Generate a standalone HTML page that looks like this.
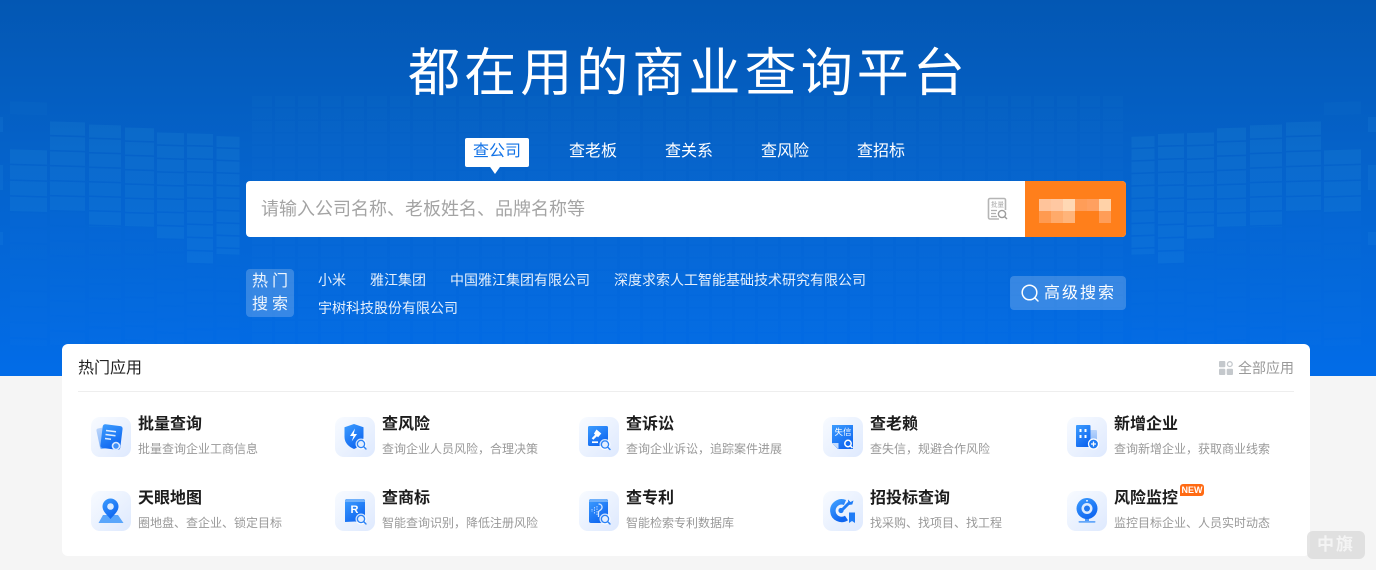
<!DOCTYPE html>
<html lang="zh-CN">
<head>
<meta charset="utf-8">
<title>商业查询平台</title>
<style>
*{box-sizing:border-box;margin:0;padding:0}
html,body{width:1376px;height:570px;overflow:hidden;background:#f5f5f5;font-family:"Liberation Sans","Noto Sans CJK SC",sans-serif}
.abs,.a{position:absolute;white-space:nowrap}
#hero{left:0;top:0;width:1376px;height:376px;background:linear-gradient(180deg,#0357b3 0%,#0562c9 40%,#026ce8 100%)}
#title{left:408px;top:32px;font-size:52px;line-height:84px;letter-spacing:4.1px;color:#fff;font-weight:400}
.tab{top:140px;font-size:16px;line-height:24px;color:#fff}
#tabon{left:465px;top:138px;width:64px;height:29px;background:#fff;border-radius:2px;color:#1272e6;font-size:16px;line-height:28px;text-align:center}
#arrow{left:488px;top:164px;width:0;height:0;border-left:7px solid transparent;border-right:7px solid transparent;border-top:10px solid #fff}
#search{left:246px;top:181px;width:880px;height:56px;background:#fff;border-radius:4px;overflow:hidden}
#ph{left:15px;top:14px;font-size:18px;line-height:28px;color:#a4a4a4}
#btn{left:779px;top:0;width:101px;height:56px;background:#ff7f1b}
.m{position:absolute;width:12px;height:12px}
#hot{left:246px;top:269px;width:48px;height:48px;background:rgba(255,255,255,.2);border-radius:4px;color:rgba(255,255,255,.92);font-size:16px;line-height:23px;letter-spacing:4px;padding:1px 0 0 6px;white-space:normal}
.lk{font-size:14px;line-height:20px;color:rgba(255,255,255,.9)}
#adv{left:1010px;top:276px;width:116px;height:34px;background:rgba(255,255,255,.2);border-radius:4px}
#advt{left:34px;top:6px;font-size:16px;line-height:24px;letter-spacing:2px;color:#fff}
#card{left:62px;top:344px;width:1248px;height:212px;background:#fff;border-radius:6px}
#ch{left:16px;top:13px;font-size:16px;line-height:24px;color:#222}
#line{left:16px;top:47px;width:1216px;height:1px;background:#eee}
#all{left:1176px;top:13px;font-size:14px;line-height:22px;color:#999}
.ib{position:absolute;width:40px;height:40px;border-radius:9px;background:linear-gradient(135deg,#f8fbff 0%,#dee9fe 100%)}
.ib svg{display:block;width:40px;height:40px}
.t{position:absolute;font-size:16px;line-height:24px;color:#1c1c1c;font-weight:700;white-space:nowrap}
.s{position:absolute;font-size:12px;line-height:18px;color:#999;white-space:nowrap}
#new{left:1118px;top:140px;width:24px;height:12px;background:#ff6a13;border-radius:3px 3px 3px 0;color:#fff;font-size:9px;line-height:12px;font-weight:700;text-align:center}
#wm{left:1307px;top:531px;width:58px;height:28px;background:rgba(205,205,205,.55);border-radius:6px;color:rgba(255,255,255,.65);font-size:17px;line-height:28px;font-weight:700;text-align:center;letter-spacing:2px}
</style>
</head>
<body>
<svg width="0" height="0" style="position:absolute"><defs>
<linearGradient id="g" x1="0" y1="0" x2="0.6" y2="1"><stop offset="0" stop-color="#3d9dff"/><stop offset="1" stop-color="#0f66f0"/></linearGradient>
<linearGradient id="l" x1="0" y1="0" x2="0" y2="1"><stop offset="0" stop-color="#b9d4fb"/><stop offset="1" stop-color="#7fb2fa"/></linearGradient>
<g id="mag"><circle cx="0" cy="0" r="4.300" fill="none" stroke="#fff" stroke-opacity=".8" stroke-width="2.400"/><circle cx="0" cy="0" r="3.600" fill="#e3eeff" stroke="#2a82f6" stroke-width="1.300"/><path d="M2.800 2.800L5 5" stroke="#2a82f6" stroke-width="1.400" stroke-linecap="round"/></g>
</defs></svg>

<div id="hero" class="abs">
<svg width="1376" height="376" style="position:absolute;left:0;top:0" fill="none">
<defs>
<g id="bars">
 <g stroke="#43b6f0" stroke-opacity=".1" transform="skewY(1.6)">
  <path d="M28.500 149V212" stroke-width="37" stroke-dasharray="14.300 1.500"/>
  <path d="M28.500 101V114" stroke-width="37" stroke-opacity=".04"/>
  <path d="M67.500 120V210" stroke-width="35" stroke-dasharray="13.500 1.500"/>
  <path d="M105 122V224" stroke-width="32" stroke-dasharray="13 1.500"/>
  <path d="M139.500 124V223" stroke-width="29" stroke-dasharray="12.800 1.500"/>
  <path d="M170.500 128V235" stroke-width="27" stroke-dasharray="11.900 1.500"/>
  <path d="M200 128V259" stroke-width="26" stroke-dasharray="11.600 1.500"/>
  <path d="M228 130V248" stroke-width="23" stroke-dasharray="11 1.500"/>
 </g>
 <g stroke="#43b6f0" stroke-opacity=".022" transform="skewY(1.6)">
  <path d="M28.500 212V345" stroke-width="37" stroke-dasharray="14.300 1.500"/>
  <path d="M67.500 210V345" stroke-width="35" stroke-dasharray="13.500 1.500"/>
  <path d="M105 224V345" stroke-width="32" stroke-dasharray="13 1.500"/>
  <path d="M139.500 223V345" stroke-width="29" stroke-dasharray="12.800 1.500"/>
  <path d="M170.500 235V345" stroke-width="27" stroke-dasharray="11.900 1.500"/>
  <path d="M200 259V345" stroke-width="26" stroke-dasharray="11.600 1.500"/>
  <path d="M228 248V345" stroke-width="23" stroke-dasharray="11 1.500"/>
 </g>
 <path d="M-2 117V132M-2 165V190M-2 232V245" stroke="#43b6f0" stroke-opacity=".09" stroke-width="10"/>
</g>
</defs>
<use href="#bars"/>
<use href="#bars" transform="translate(1371,0) scale(-1,1)"/>
<g stroke="#5cc0f5" stroke-opacity=".03">
 <path d="M262 96V345M285 96V345M308 96V345M331 96V345M354 96V345M377 96V345M400 96V345M423 96V345M446 96V345M469 96V345M492 96V345M515 96V345M538 96V345M561 96V345M584 96V345M607 96V345M630 96V345M653 96V345M676 96V345M699 96V345M722 96V345M745 96V345M768 96V345M791 96V345M814 96V345M837 96V345M860 96V345M883 96V345M906 96V345M929 96V345M952 96V345M975 96V345M998 96V345M1021 96V345M1044 96V345M1067 96V345M1090 96V345M1113 96V345" stroke-width="20" stroke-dasharray="11 1.500"/>
</g>
</svg>

<div id="title" class="abs">都在用的商业查询平台</div>
<div id="tabon" class="abs">查公司</div>
<div id="arrow" class="abs"></div>
<div class="abs tab" style="left:569px">查老板</div>
<div class="abs tab" style="left:665px">查关系</div>
<div class="abs tab" style="left:761px">查风险</div>
<div class="abs tab" style="left:857px">查招标</div>

<div id="search" class="abs">
 <div id="ph" class="abs">请输入公司名称、老板姓名、品牌名称等</div>
 <svg style="position:absolute;left:741px;top:16px" width="22" height="25" viewBox="0 0 22 25" fill="none">
  <path d="M12 22H3a1.500 1.500 0 0 1-1.500-1.500V3A1.500 1.500 0 0 1 3 1.500h14A1.500 1.500 0 0 1 18.500 3v10" stroke="#b5b5b5" stroke-width="1.600"/>
  <text x="4" y="9.500" font-size="6.500" fill="#a8a8a8" font-family="'Noto Sans CJK SC',sans-serif">批量</text>
  <path d="M4 13.500h6M4 16.500h5M4 19.500h6" stroke="#b0b0b0" stroke-width="1.300"/>
  <circle cx="15" cy="17" r="3.600" stroke="#9c9c9c" stroke-width="1.400" fill="#fff"/>
  <path d="M17.600 19.600L20 22" stroke="#9c9c9c" stroke-width="1.400"/>
 </svg>
 <div id="btn" class="abs">
  <div class="m" style="left:14px;top:18px;background:#ffc49b"></div>
  <div class="m" style="left:26px;top:18px;background:#ffc8a2"></div>
  <div class="m" style="left:38px;top:18px;background:#ffd8b4"></div>
  <div class="m" style="left:50px;top:18px;background:#ff9d58"></div>
  <div class="m" style="left:62px;top:18px;background:#ffa060"></div>
  <div class="m" style="left:74px;top:18px;background:#ffd2a8"></div>
  <div class="m" style="left:14px;top:30px;background:#ff9a50"></div>
  <div class="m" style="left:26px;top:30px;background:#ffaa6a"></div>
  <div class="m" style="left:38px;top:30px;background:#ffb47a"></div>
  <div class="m" style="left:74px;top:30px;background:#ff9d58"></div>
 </div>
</div>

<div id="hot" class="abs">热门<br>搜索</div>
<div class="abs lk" style="left:318px;top:270px">小米</div>
<div class="abs lk" style="left:370px;top:270px">雅江集团</div>
<div class="abs lk" style="left:450px;top:270px">中国雅江集团有限公司</div>
<div class="abs lk" style="left:614px;top:270px">深度求索人工智能基础技术研究有限公司</div>
<div class="abs lk" style="left:318px;top:298px">宇树科技股份有限公司</div>

<div id="adv" class="abs">
 <svg style="position:absolute;left:10px;top:7px" width="20" height="20" viewBox="0 0 20 20" fill="none"><circle cx="9.500" cy="9.500" r="7.300" stroke="#fff" stroke-width="1.500"/><path d="M14.800 14.800L18 18" stroke="#fff" stroke-width="1.500" stroke-linecap="round"/></svg>
 <div id="advt" class="abs">高级搜索</div>
</div>
</div>

<div id="card" class="abs">
 <div id="ch" class="abs">热门应用</div>
 <svg style="position:absolute;left:1157px;top:17px" width="14" height="14" viewBox="0 0 14 14"><rect x="0" y="0" width="6.300" height="6.300" rx="1" fill="#c4c8cc"/><circle cx="10.800" cy="3.100" r="2.400" fill="none" stroke="#c4c8cc" stroke-width="1.300"/><rect x="0" y="7.700" width="6.300" height="6.300" rx="1" fill="#c4c8cc"/><rect x="7.700" y="7.700" width="6.300" height="6.300" rx="1" fill="#c4c8cc"/></svg>
 <div id="all" class="abs">全部应用</div>
 <div id="line" class="abs"></div>

 <!-- row 1 -->
 <div class="ib" style="left:29px;top:73px"><svg viewBox="0 0 40 40"><rect x="7" y="10" width="17" height="21" rx="2" transform="rotate(-12 15 20)" fill="url(#l)"/><rect x="10.500" y="8" width="20" height="24" rx="2.500" transform="rotate(7 20 20)" fill="url(#g)"/><path d="M15 13.500l10 1.300M14.500 17.500l10 1.300M14 21.500l6 .8" stroke="#fff" stroke-opacity=".85" stroke-width="1.500" fill="none"/><circle cx="25" cy="29" r="3.500" fill="#3f8ff8" stroke="#d9e8ff" stroke-width="1.600"/></svg></div>
 <div class="t" style="left:76px;top:69px">批量查询</div>
 <div class="s" style="left:76px;top:96px">批量查询企业工商信息</div>

 <div class="ib" style="left:273px;top:73px"><svg viewBox="0 0 40 40"><path d="M19 7l9.500 3.200V20c0 6-4.500 10-9.500 12-5-2-9.500-6-9.500-12v-9.800z" fill="url(#g)"/><path d="M20 11.500l-5 7.500h3.500l-1.800 5.500 5.300-7.500h-3.300z" fill="#fff"/><use href="#mag" x="26" y="27"/></svg></div>
 <div class="t" style="left:320px;top:69px">查风险</div>
 <div class="s" style="left:320px;top:96px">查询企业人员风险，合理决策</div>

 <div class="ib" style="left:517px;top:73px"><svg viewBox="0 0 40 40"><rect x="9" y="9" width="20" height="20" rx="1.500" fill="url(#g)"/><path d="M17.500 12.500l4.800 4-3.200 3.800-1.200-1-3.600 3.500-1.600-1.500 3.400-3.600-1.200-1.100z" fill="#fff"/><path d="M13 25.200h6" stroke="#fff" stroke-width="1.700"/><use href="#mag" x="26" y="27.500"/></svg></div>
 <div class="t" style="left:564px;top:69px">查诉讼</div>
 <div class="s" style="left:564px;top:96px">查询企业诉讼，追踪案件进展</div>

 <div class="ib" style="left:761px;top:73px"><svg viewBox="0 0 40 40"><path d="M9 8h21v24H15l-6-6z" fill="url(#g)"/><path d="M9 26l6.500 6v-6z" fill="#c6dcfc"/><text x="11.500" y="18" font-size="8.500" fill="#fff" font-family="'Noto Sans CJK SC',sans-serif">失信</text><circle cx="25" cy="26.500" r="3.200" fill="none" stroke="#fff" stroke-width="1.500"/><path d="M27.300 28.800L29.500 31" stroke="#fff" stroke-width="1.500"/></svg></div>
 <div class="t" style="left:808px;top:69px">查老赖</div>
 <div class="s" style="left:808px;top:96px">查失信，规避合作风险</div>

 <div class="ib" style="left:1005px;top:73px"><svg viewBox="0 0 40 40"><rect x="21" y="13" width="9" height="16" rx="1" fill="url(#l)"/><rect x="9" y="8" width="14.500" height="22" rx="1" fill="url(#g)"/><path d="M12.500 12h2v3h-2zM17.500 12h2v3h-2zM12.500 18h2v3h-2zM17.500 18h2v3h-2z" fill="#fff"/><circle cx="26.500" cy="27" r="5" fill="#1d7bf5" stroke="#fff" stroke-width="1.200"/><path d="M24 27h5M26.500 24.500v5" stroke="#fff" stroke-width="1.300"/></svg></div>
 <div class="t" style="left:1052px;top:69px">新增企业</div>
 <div class="s" style="left:1052px;top:96px">查询新增企业，获取商业线索</div>

 <!-- row 2 -->
 <div class="ib" style="left:29px;top:147px"><svg viewBox="0 0 40 40"><path d="M12 24h15l5.500 8h-25z" fill="#5aa6fb"/><path d="M19.500 7.500a8 8 0 0 1 8 8c0 5-5 9-8 12.500-3-3.500-8-7.500-8-12.500a8 8 0 0 1 8-8z" fill="url(#g)"/><circle cx="19.500" cy="15.500" r="3.300" fill="#dcebff"/></svg></div>
 <div class="t" style="left:76px;top:143px">天眼地图</div>
 <div class="s" style="left:76px;top:170px">圈地盘、查企业、锁定目标</div>

 <div class="ib" style="left:273px;top:147px"><svg viewBox="0 0 40 40"><path d="M10 10a2 2 0 0 1 2-2h16a2 2 0 0 1 2 2v22l-10-1.500L10 31z" fill="url(#g)"/><path d="M10 11a3 3 0 0 1 2-3h16a3 3 0 0 1 2 3z" fill="#6fb0fb"/><text x="15.500" y="22" font-size="11" font-weight="700" fill="#fff" font-family="'Liberation Sans',sans-serif">R</text><use href="#mag" x="26" y="28"/></svg></div>
 <div class="t" style="left:320px;top:143px">查商标</div>
 <div class="s" style="left:320px;top:170px">智能查询识别，降低注册风险</div>

 <div class="ib" style="left:517px;top:147px"><svg viewBox="0 0 40 40"><rect x="10" y="8" width="19" height="24" rx="2" fill="url(#g)"/><path d="M10 11a3 3 0 0 1 2-3h15a3 3 0 0 1 2 3z" fill="#6fb0fb"/><path d="M19.500 13c3.500 0 4.500 3.500 2.500 5.500l-2.500 2V26" stroke="#d5e6ff" stroke-width="1.300" fill="none"/><path d="M18 15v9M15.500 16v7M13 18v3" stroke="#a9cdff" stroke-width="1.100" stroke-dasharray="1.500 1"/><use href="#mag" x="26" y="28"/></svg></div>
 <div class="t" style="left:564px;top:143px">查专利</div>
 <div class="s" style="left:564px;top:170px">智能检索专利数据库</div>

 <div class="ib" style="left:761px;top:147px"><svg viewBox="0 0 40 40"><path d="M22 11.500a8.800 8.800 0 1 0 1.500 15.500" fill="none" stroke="url(#g)" stroke-width="5.500"/><circle cx="18" cy="19.500" r="2.600" fill="#1f7cf6"/><path d="M19 19l7-7" stroke="#1f7cf6" stroke-width="3"/><path d="M25 8.500l2.500 2.500 3-1.500-1.200 4-4 .5z" fill="#1f7cf6"/><path d="M26 21.500h6V32l-3-2-3 2z" fill="#1f7cf6"/></svg></div>
 <div class="t" style="left:808px;top:143px">招投标查询</div>
 <div class="s" style="left:808px;top:170px">找采购、找项目、找工程</div>

 <div class="ib" style="left:1005px;top:147px"><svg viewBox="0 0 40 40"><path d="M18 27h4v3h-4z" fill="#4a97f8"/><rect x="11.500" y="30" width="17" height="1.800" rx=".9" fill="#64a7fa"/><circle cx="20" cy="17.500" r="10.500" fill="url(#g)"/><circle cx="20" cy="17.500" r="5.500" fill="#dcebff"/><circle cx="20" cy="17.500" r="3" fill="#2278ee"/><circle cx="20" cy="9.800" r=".9" fill="#fff"/></svg></div>
 <div class="t" style="left:1052px;top:143px">风险监控</div>
 <div class="s" style="left:1052px;top:170px">监控目标企业、人员实时动态</div>
 <div id="new" class="abs">NEW</div>
</div>

<div id="wm" class="abs">中旗</div>
</body>
</html>
